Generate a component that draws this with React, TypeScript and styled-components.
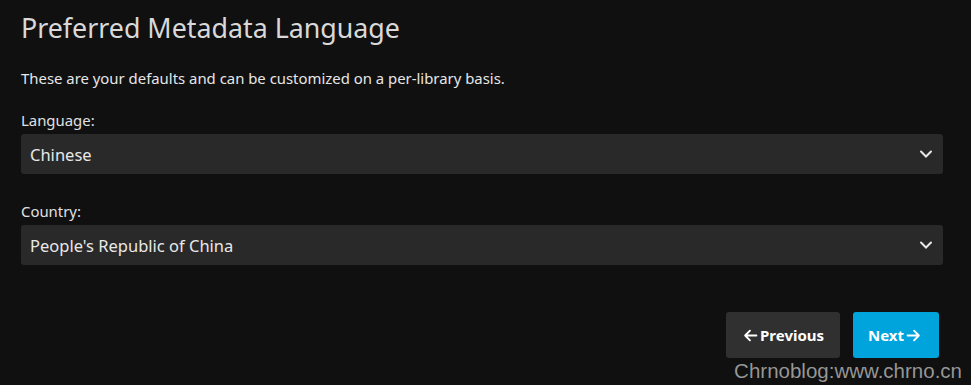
import styled, { createGlobalStyle } from "styled-components";

const GlobalStyle = createGlobalStyle`
  html, body {
    margin: 0;
    padding: 0;
    background: #101010;
    height: 100%;
  }
  body {
    font-family: "Noto Sans", "Open Sans", sans-serif;
    color: #dddddd;
  }
`;

const Page = styled.div`
  position: relative;
  width: 971px;
  height: 385px;
  box-sizing: border-box;
  padding: 11px 28px 0 21px;
  overflow: hidden;
`;

const Title = styled.h1`
  margin: 0;
  font-size: 26.8px;
  font-weight: 400;
  line-height: 34px;
  color: #d9d9d9;
`;

const Description = styled.p`
  margin: 23px 0 0;
  font-size: 14.9px;
  line-height: 20px;
  color: #e6e6e6;
`;

const Field = styled.div<{ $top: number }>`
  margin-top: ${(p) => p.$top}px;
  display: flex;
  flex-direction: column;
`;

const Label = styled.label`
  font-size: 14.9px;
  line-height: 20px;
  margin-bottom: 4px;
  color: #e0e0e0;
`;

const SelectBox = styled.div`
  height: 40px;
  background: #292929;
  border-radius: 3px;
  display: flex;
  align-items: center;
  justify-content: space-between;
  padding: 0 10px 0 9px;
  font-size: 16.5px;
  color: #e8e8e8;
`;

const Chevron = () => (
  <svg width="14" height="14" viewBox="0 0 14 14" fill="none">
    <path d="M2 4.5 L7 9.5 L12 4.5" stroke="#e8e8e8" strokeWidth="2" strokeLinecap="round" />
  </svg>
);

const ButtonRow = styled.div`
  display: flex;
  justify-content: flex-end;
  gap: 13px;
  margin-top: 47px;
  padding-right: 4px;
`;

const Button = styled.button<{ $primary?: boolean }>`
  height: 46px;
  border: none;
  border-radius: 3px;
  padding: 0 0 0 ${(p) => (p.$primary ? 15 : 17)}px;
  display: flex;
  align-items: center;
  gap: 2px;
  font-family: "Noto Sans", "Open Sans", sans-serif;
  font-size: 15px;
  font-weight: 700;
  color: #ffffff;
  background: ${(p) => (p.$primary ? "#00a4dc" : "#303030")};
  width: ${(p) => (p.$primary ? 86 : 114)}px;
`;

const Arrow = ({ left }: { left?: boolean }) => (
  <svg width="15" height="15" viewBox="0 0 14 14" fill="none" style={{ transform: left ? "scaleX(-1)" : undefined }}>
    <path d="M1.5 7 H12 M7.5 2.5 L12 7 L7.5 11.5" stroke="#ffffff" strokeWidth="1.8" strokeLinecap="round" strokeLinejoin="round" />
  </svg>
);

const Watermark = styled.div`
  position: absolute;
  right: 9px;
  bottom: 2px;
  font-family: "Liberation Sans", Arial, sans-serif;
  font-size: 20.5px;
  color: rgba(190, 190, 190, 0.78);
  white-space: nowrap;
`;

export default function App() {
  return (
    <>
      <GlobalStyle />
      <Page>
        <Title>Preferred Metadata Language</Title>
        <Description>These are your defaults and can be customized on a per-library basis.</Description>
        <Field $top={22}>
          <Label>Language:</Label>
          <SelectBox>
            <span>Chinese</span>
            <Chevron />
          </SelectBox>
        </Field>
        <Field $top={27}>
          <Label>Country:</Label>
          <SelectBox>
            <span>People's Republic of China</span>
            <Chevron />
          </SelectBox>
        </Field>
        <ButtonRow>
          <Button>
            <Arrow left />
            Previous
          </Button>
          <Button $primary>
            Next
            <Arrow />
          </Button>
        </ButtonRow>
        <Watermark>Chrnoblog:www.chrno.cn</Watermark>
      </Page>
    </>
  );
}
